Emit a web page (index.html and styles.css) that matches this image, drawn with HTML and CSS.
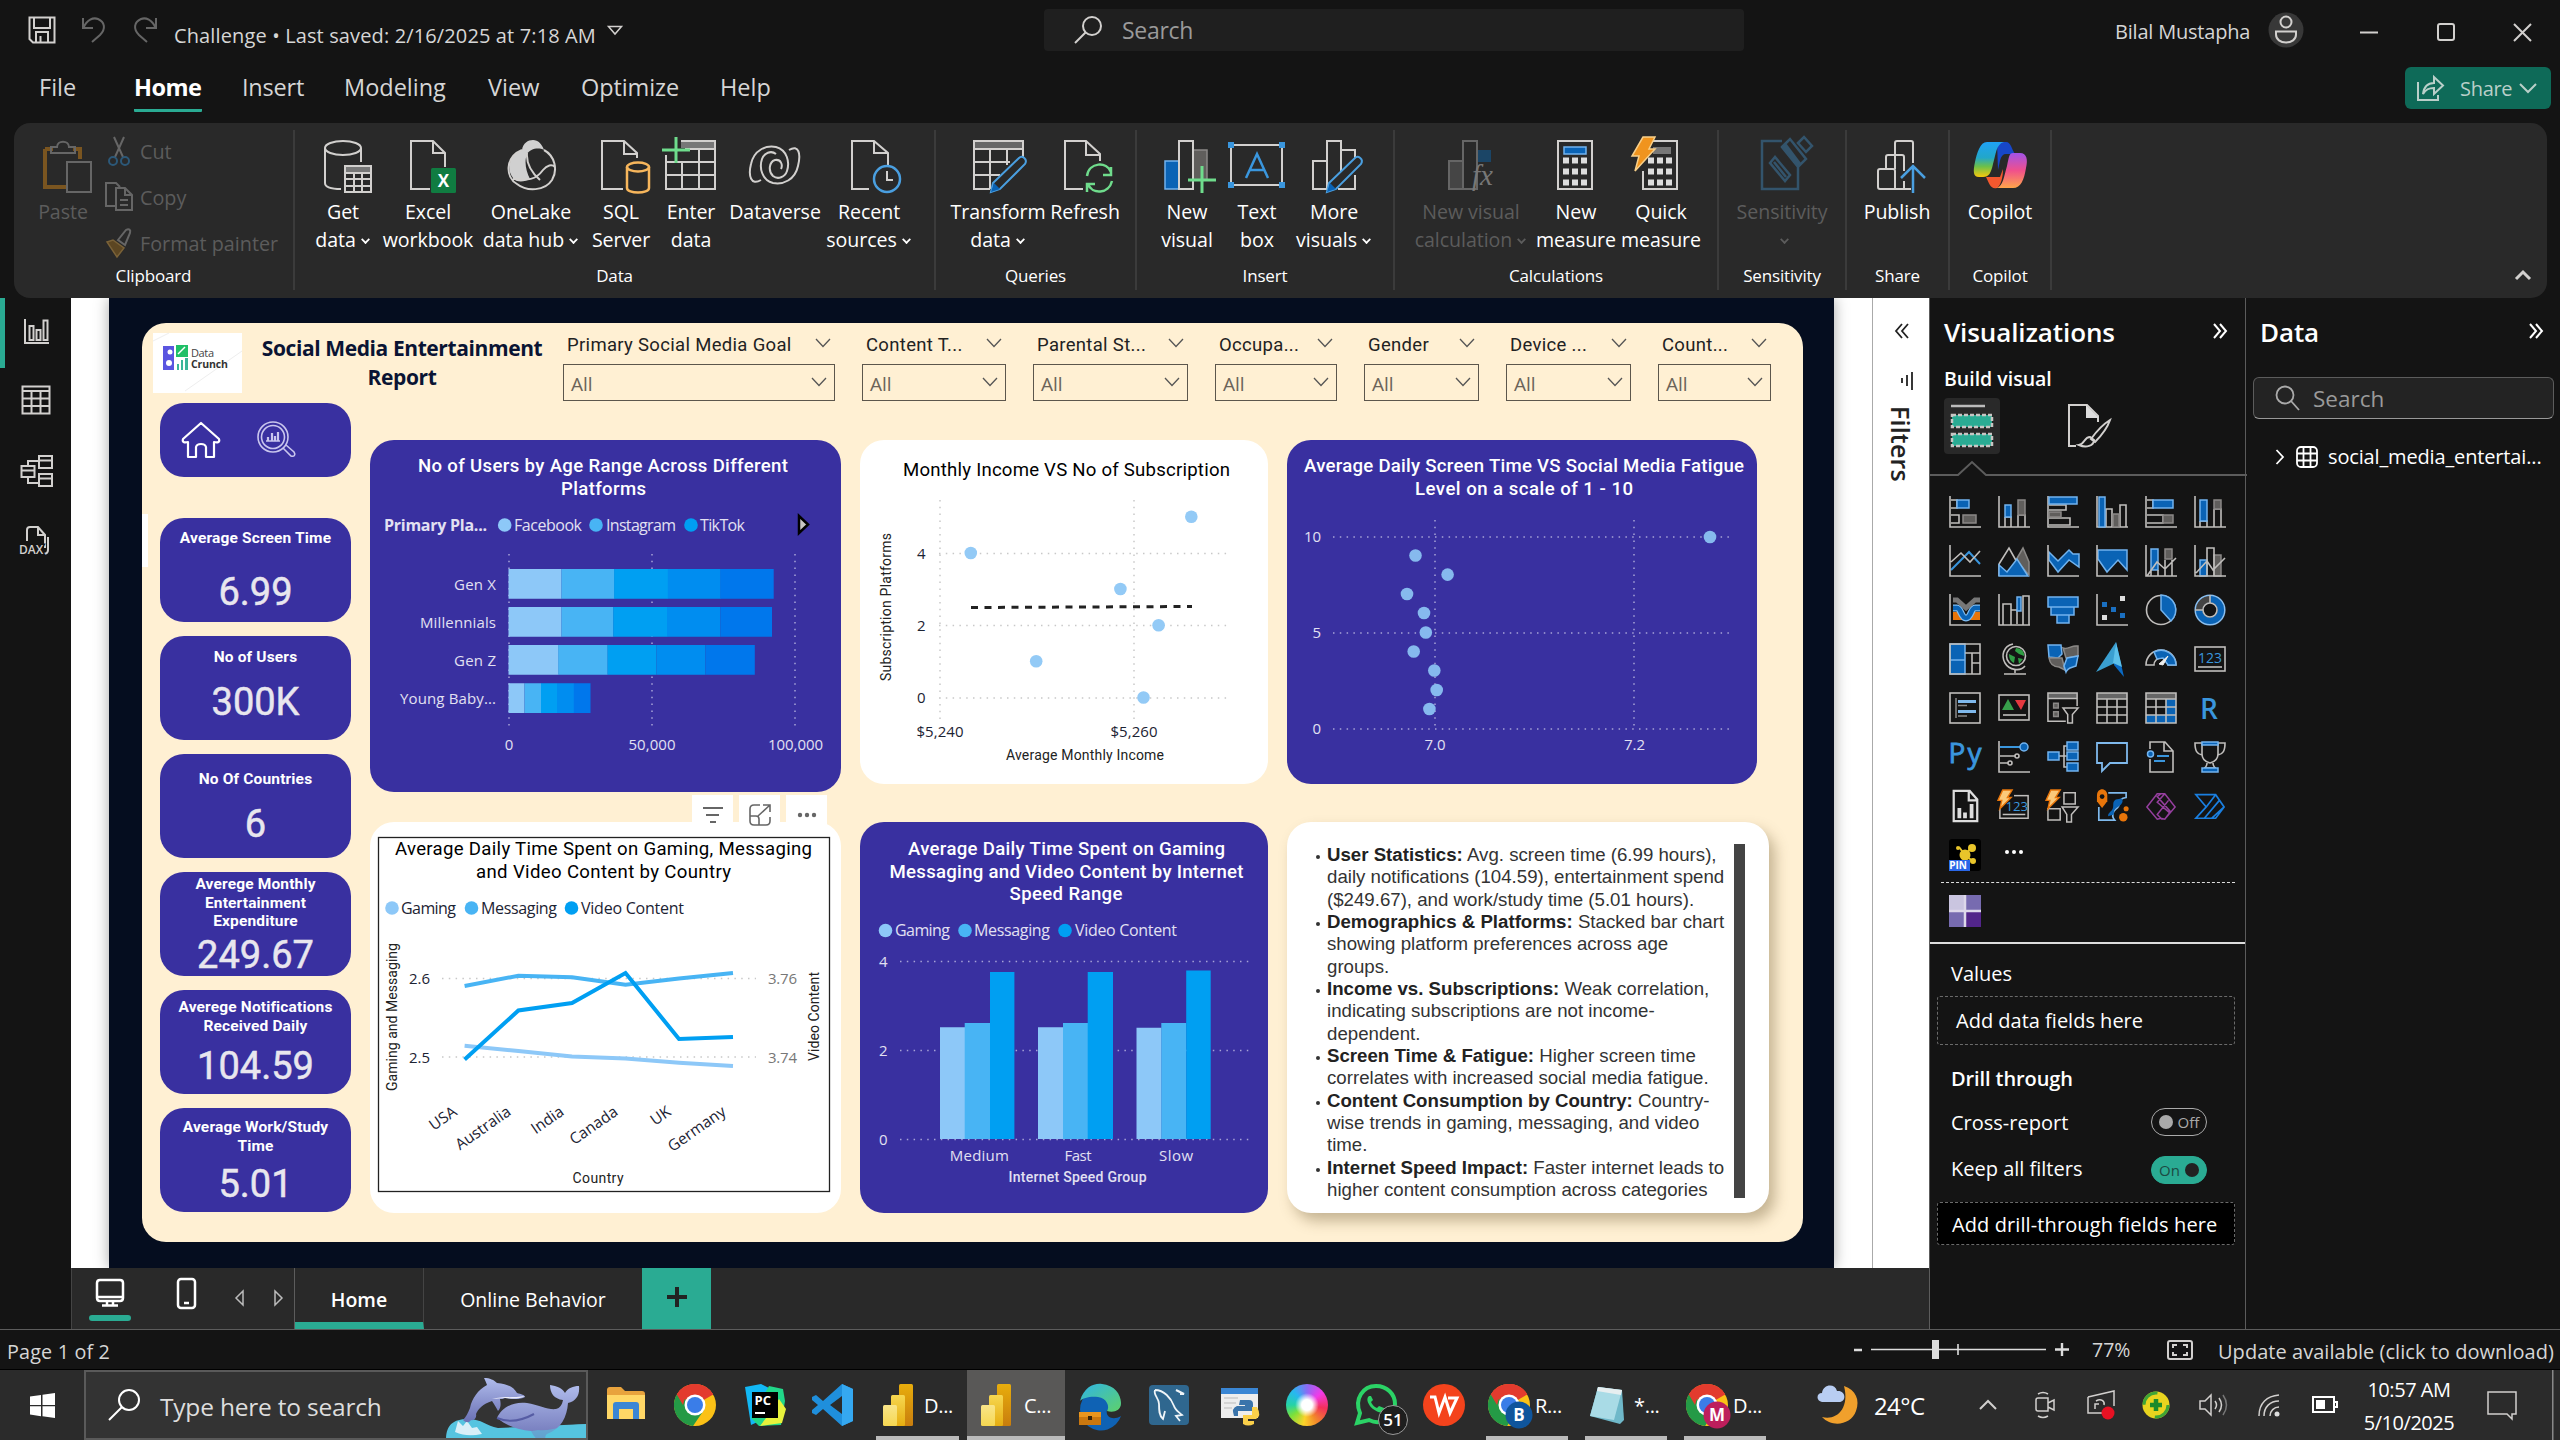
FILE: index.html
```html
<!DOCTYPE html>
<html lang="en">
<head>
<meta charset="utf-8">
<title>Challenge - Power BI Desktop</title>
<link rel="stylesheet" href="styles.css">
</head>
<body>
<svg class="defs" width="0" height="0">
  <defs>
    <linearGradient id="cpA" x1="0" y1="0" x2="0" y2="1"><stop offset="0" stop-color="#1fa2f5"/><stop offset=".45" stop-color="#22a7c9"/><stop offset=".7" stop-color="#6cc04a"/><stop offset="1" stop-color="#f8c80c"/></linearGradient>
    <linearGradient id="cpB" x1="0" y1="0" x2="0" y2="1"><stop offset="0" stop-color="#a153e8"/><stop offset=".5" stop-color="#f0508c"/><stop offset="1" stop-color="#ffa54a"/></linearGradient>
    <linearGradient id="pbi1" x1="0" y1="0" x2="0" y2="1"><stop offset="0" stop-color="#e8ad0c"/><stop offset="1" stop-color="#c87d0e"/></linearGradient>
    <linearGradient id="pbi2" x1="0" y1="0" x2="0" y2="1"><stop offset="0" stop-color="#f6d751"/><stop offset="1" stop-color="#e6ad10"/></linearGradient>
    <linearGradient id="pbi3" x1="0" y1="0" x2="0" y2="1"><stop offset="0" stop-color="#f9e589"/><stop offset="1" stop-color="#f6d751"/></linearGradient>
    <linearGradient id="edge" x1="0" y1="0" x2="1" y2="1"><stop offset="0" stop-color="#2fb4e6"/><stop offset="1" stop-color="#5ed16a"/></linearGradient>
    <linearGradient id="whale" x1="0" y1="0" x2="0" y2="1"><stop offset="0" stop-color="#b0bcec"/><stop offset="1" stop-color="#6a70b4"/></linearGradient>
    <g id="chrome">
      <circle cx="22" cy="22" r="21" fill="#fbc116"/>
      <path d="M22 22 3.8 11.5A21 21 0 0 1 40.2 11.5Z" fill="#e33b2e"/>
      <path d="M22 22 3.8 11.5A21 21 0 0 0 20 43L31 27Z" fill="#249a46"/>
      <path d="M13 11.500H40.200A21 21 0 0 0 3.800 11.500L10 22Z" fill="#e33b2e"/>
      <circle cx="22" cy="22" r="10.500" fill="#fff"/><circle cx="22" cy="22" r="8" fill="#3a7de8"/>
    </g>
    <g id="pbi"><rect x="17" y="1" width="14" height="42" rx="1.500" fill="url(#pbi1)"/><rect x="9" y="12" width="14" height="31" rx="1.500" fill="url(#pbi2)"/><rect x="1" y="22" width="14" height="21" rx="1.500" fill="url(#pbi3)"/></g>
    <g id="chev"><path d="M1 1l7 7.500 7-7.500" fill="none" stroke="#555" stroke-width="1.300"/></g>
  </defs>
</svg>

<header class="titlebar">
  <svg class="qa save" width="28" height="28" viewBox="0 0 28 28"><path class="l" d="M1.500 1.500h25v25H5l-3.500-3.500zM6 1.500v10.500h16V1.500M8 26V16h12v10M12.500 20v6"/></svg>
  <svg class="qa undo" width="26" height="28" viewBox="0 0 26 28"><path class="d" d="M2 2v10h10M2.500 11.500C6 4 12 1 17 3c7 3 8 10 2 16l-8 7"/></svg>
  <svg class="qa redo" width="26" height="28" viewBox="0 0 26 28"><path class="d" d="M24 2v10H14M23.500 11.500C20 4 14 1 9 3c-7 3-8 10-2 16l8 7"/></svg>
  <span class="doc">Challenge • Last saved: 2/16/2025 at 7:18 AM</span>
  <svg class="doc-caret" width="16" height="11" viewBox="0 0 16 11"><path class="l thin" d="M1.500 1.500h13L8 9z"/></svg>
  <div class="top-search">
    <svg width="30" height="30" viewBox="0 0 30 30"><circle class="l" cx="19" cy="11" r="9"/><path class="l" d="M12.500 17.500 2 28"/></svg>
    <span>Search</span>
  </div>
  <span class="user">Bilal Mustapha</span>
  <svg class="avatar" width="36" height="36" viewBox="0 0 36 36"><circle cx="18" cy="18" r="17.500" fill="#383838"/><circle class="l" cx="18" cy="10" r="5.500"/><path class="l" d="M8 19.500h20v3c0 5-4.500 8-10 8s-10-3-10-8z"/></svg>
  <svg class="win" width="180" height="24" viewBox="0 0 180 24"><path class="l" d="M2 12.500h18" /><rect class="l" x="80" y="4" width="16" height="16" rx="2"/><path class="l" d="M156 4l17 17M173 4l-17 17"/></svg>
</header>

<nav class="menubar">
  <a class="m-file"><span>File</span></a><a class="m-home on"><span>Home</span></a><a class="m-insert"><span>Insert</span></a><a class="m-model"><span>Modeling</span></a><a class="m-view"><span>View</span></a><a class="m-opt"><span>Optimize</span></a><a><span>Help</span></a>
  <div class="share">
    <svg width="30" height="28" viewBox="0 0 30 28"><path class="s" d="M2 8v18h20v-5M2 8v0M7 20c1-8 5-11 11-11V3l9 8.500-9 8.500v-6c-5 0-8 1-11 6z"/></svg>
    <span>Share</span>
    <svg width="18" height="12" viewBox="0 0 18 12"><path class="s" d="M1 2l8 8 8-8"/></svg>
  </div>
</nav>

<section class="ribbon">
  <div class="grp g-clip">
    <div class="btns">
      <div class="rb off"><svg width="60" height="60" viewBox="0 0 60 60"><path d="M12 14h8M40 14h7v10M12 14v38h22" fill="none" stroke="#7a5520" stroke-width="4"/><path class="d" d="M18 18v-6h6c0-7 12-7 12 0h6v6zM34 27h24v30H34z"/></svg><span>Paste</span></div>
      <div class="clip-list">
        <div><svg width="28" height="30" viewBox="0 0 28 30"><path class="d" d="M9 1l9 20M19 1l-9 20"/><circle cx="8" cy="25" r="4" fill="none" stroke="#2c5878" stroke-width="2"/><circle cx="20" cy="25" r="4" fill="none" stroke="#2c5878" stroke-width="2"/></svg>Cut</div>
        <div><svg width="28" height="30" viewBox="0 0 28 30"><path class="d" d="M10 24H1V1h10l4 4M11 6h9l7 7v15H11zM20 6v7h7M15 18h8M15 23h8"/></svg>Copy</div>
        <div><svg width="28" height="30" viewBox="0 0 28 30"><path class="d" d="M13 12l8-10c3-2 5 0 4 3l-5 12z"/><path d="M2 14l6-2 11 8-7 9z" fill="#5c4622" stroke="#7a6238" stroke-width="1.500"/></svg>Format painter</div>
      </div>
    </div>
    <div class="cap">Clipboard</div>
  </div>
  <div class="grp g-data">
    <div class="btns">
      <div class="rb"><svg width="60" height="60" viewBox="0 0 60 60"><ellipse class="l" cx="30" cy="13" rx="18" ry="7"/><path class="l" d="M12 13v35c0 4 6 6 16 6M48 13v14"/><path d="M31 31h27v26H31z" fill="#292929"/><path d="M32 32h26v5H32z" fill="#777"/><path class="l" d="M32 31h26v26H32zM32 38h26M32 44h26M32 51h26M41 38v19M49 38v19"/></svg><span>Get</span><span>data<i></i></span></div>
      <div class="rb ml35"><svg width="60" height="60" viewBox="0 0 60 60"><path class="l" d="M32 54H13V6h22l12 12v14M35 6v12h12"/><rect x="33" y="33" width="25" height="25" rx="1.500" fill="#107c41"/><text x="45.500" y="52" class="xl">X</text></svg><span>Excel</span><span>workbook</span></div>
      <div class="rb ml53"><svg width="60" height="60" viewBox="0 0 60 60"><path d="M21 15C22 8 27 5 32 5s9 4 11 10c-6-3-14-1-17 4-3 8-1 17 3 25-5 3-14 4-17-1-7-9-4-22 9-28Z" fill="#d0d0d0"/><path class="l" d="M21 15C4 22 4 42 16 49c10 8 28 7 35-4 6-10 3-24-8-30M26 18c-1 12 5 20 13 27M12 44c14 1 22 2 30-9 4-5 9-6 12-3"/></svg><span>OneLake</span><span>data hub<i></i></span></div>
      <div class="rb ml40"><svg width="60" height="60" viewBox="0 0 60 60"><path class="l" d="M32 54H11V6h22l13 12v5M33 6v13h14"/><ellipse cx="47" cy="32" rx="11" ry="4.500" class="o"/><path class="o" d="M36 32v21c0 6 22 6 22 0V32"/></svg><span>SQL</span><span>Server</span></div>
      <div class="rb ml20"><svg width="60" height="60" viewBox="0 0 60 60"><path d="M20 7h34v6H20z" fill="#777"/><path class="l" d="M20 6h34v48H5V20M24 14h30M5 27h49M5 40h49M21 27v27M38 14v40"/><path d="M15 2v26M1 15h28" stroke="#6fdc8c" stroke-width="3" fill="none"/></svg><span>Enter</span><span>data</span></div>
      <div class="rb ml34"><svg width="60" height="60" viewBox="0 0 60 60"><path class="l" d="M16 45c-10 6-13-4-10-16C9 15 21 10 31 12c11 3 14 15 11 24-2 6-9 9-14 5-5-5-4-14 2-16 6-1 8 5 6 9"/><path class="l" d="M44 15c10-6 12 4 9 16-3 14-15 19-25 17-11-3-14-15-11-24 2-6 9-9 14-5"/></svg><span>Dataverse</span></div>
      <div class="rb ml43"><svg width="60" height="60" viewBox="0 0 60 60"><path class="l" d="M30 54H13V6h22l14 12v12M35 6v12h13"/><circle cx="48" cy="44" r="13" fill="none" stroke="#4a9fe0" stroke-width="2.500"/><path class="l" d="M48 36v9h6"/></svg><span>Recent</span><span>sources<i></i></span></div>
    </div>
    <div class="cap">Data</div>
  </div>
  <div class="grp g-q">
    <div class="btns">
      <div class="rb"><svg width="60" height="60" viewBox="0 0 60 60"><path d="M7 7h48v6H7z" fill="#666"/><path class="l" d="M22 54H6V6h49v16M6 14h49M6 27h36M6 40h26M22 14v40M39 14v16"/><path class="pen" d="M51 23c3-3 9 1 6 6L32 54l-9 3 2-9z"/><path d="M23 57l3-9 6 6z" fill="#0a63b5"/></svg><span>Transform</span><span>data<i></i></span></div>
      <div class="rb ml37"><svg width="60" height="60" viewBox="0 0 60 60"><path class="l" d="M28 54H10V6h21l14 13v7M31 6v14h15"/><path class="gr" d="M32 41c2-14 20-15 24-4M56 32v8h-8M57 46c-3 13-20 14-24 3M32 57v-8h8"/></svg><span>Refresh</span></div>
    </div>
    <div class="cap">Queries</div>
  </div>
  <div class="grp g-i">
    <div class="btns">
      <div class="rb"><svg width="60" height="60" viewBox="0 0 60 60"><path class="fb" d="M8 26h14v28H8z"/><path class="fg" d="M36 15h14v30H36z"/><path class="l" d="M22 6h14v48H22z"/><path d="M45 31v27M31 45h28" stroke="#6fdc8c" stroke-width="3"/></svg><span>New</span><span>visual</span></div>
      <div class="rb ml20"><svg width="60" height="60" viewBox="0 0 60 60"><rect class="l" x="4" y="10" width="51" height="40"/><path d="M1 7h6v6H1zM52 7h6v6h-6zM1 47h6v6H1zM52 47h6v6h-6z" fill="#3a96dd"/><path d="M19 43L30 19l11 24M23 35h14" fill="none" stroke="#3a96dd" stroke-width="2.500"/></svg><span>Text</span><span>box</span></div>
      <div class="rb ml27"><svg width="60" height="60" viewBox="0 0 60 60"><path class="l" d="M24 54H9V26h14v28M23 26V6h14v34M37 15h14v8M51 40v14H34"/><path class="pen" d="M51 23c3-3 9 1 6 6L32 54l-9 3 2-9z"/><path d="M23 57l3-9 6 6z" fill="#0a63b5"/></svg><span>More</span><span>visuals<i></i></span></div>
    </div>
    <div class="cap">Insert</div>
  </div>
  <div class="grp g-c">
    <div class="btns">
      <div class="rb off"><svg width="60" height="60" viewBox="0 0 60 60"><path d="M8 26h14v28H8z" fill="#454545"/><path class="d" d="M8 26h14v28H8zM22 54V6h14v48z"/><path d="M37 15h13v12H37z" fill="#1b4566"/><text x="31" y="50" class="fx">fx</text></svg><span>New visual</span><span>calculation<i></i></span></div>
      <div class="rb ml55"><svg width="60" height="60" viewBox="0 0 60 60"><path class="l" d="M12 6h34v48H12z"/><path class="fb" d="M18 12h22v7H18z"/><path d="M17 25.500h25M17 36.500h25M17 47.500h25" stroke="#ddd" stroke-width="6" stroke-dasharray="6 3"/></svg><span>New</span><span>measure</span></div>
      <div class="rb ml35"><svg width="60" height="60" viewBox="0 0 60 60"><path class="l" d="M12 36v18h34V6H22"/><path d="M22 12h18v7H22z" fill="#777"/><path d="M17 25.500h25M17 36.500h25M17 47.500h25" stroke="#ddd" stroke-width="6" stroke-dasharray="6 3"/><path d="M12 2h12l-6 12h6L4 36l4-15H1z" fill="#f0941e" stroke="#f8d08a" stroke-width="1.500"/></svg><span>Quick</span><span>measure</span></div>
    </div>
    <div class="cap">Calculations</div>
  </div>
  <div class="grp g-s">
    <div class="btns"><div class="rb off"><svg width="60" height="60" viewBox="0 0 60 60"><path d="M30 6H10v48h36V32M30 12l8-8 16 20-8 8zM46 8l6-6 8 9-6 6zM18 28l5-6 15 18-5 6zM22 27l12 15" fill="none" stroke="#33546c" stroke-width="2.500"/><path d="M30 12l4-4 15 20-3 4z" fill="#33546c"/></svg><span>Sensitivity</span><span><i></i></span></div></div>
    <div class="cap">Sensitivity</div>
  </div>
  <div class="grp g-p">
    <div class="btns"><div class="rb"><svg width="60" height="60" viewBox="0 0 60 60"><path class="l" d="M28 34V8q0-2 2-2h14q2 0 2 2v20M19 34V22q0-2 2-2h14q2 0 2 2v14M11 36q0-2 2-2h13q2 0 2 2v18H13q-2 0-2-2zM28 54h16M37 46v8"/><path d="M46 58V32M34 43l12-12 12 12" fill="none" stroke="#4a9fe0" stroke-width="2.500"/></svg><span>Publish</span></div></div>
    <div class="cap">Share</div>
  </div>
  <div class="grp g-co">
    <div class="btns"><div class="rb"><svg width="60" height="60" viewBox="0 0 60 60"><path d="M27 7h9c5 0 6 8 9 12h-9c-6 0-6 8-8 16z" fill="#1747c9"/><path d="M17 7h17c-8 2-8 12-11 22-2 9-4 13-10 13H9c-6 0-6-6-4-15S10 7 17 7Z" fill="url(#cpA)"/><path d="M16 42h14l3-8c0 8-2 16-6 19-6 2-8-5-11-11Z" fill="#f4582e"/><path d="M43 18h7c7 0 8 7 6 15-2 12-5 20-13 20H26c7-1 8-12 11-22 2-9 2-13 6-13Z" fill="url(#cpB)"/></svg><span>Copilot</span></div></div>
    <div class="cap">Copilot</div>
  </div>
  <svg class="collapse" width="18" height="12" viewBox="0 0 18 12"><path class="l thick" d="M2 10l7-7 7 7"/></svg>
</section>

<main class="main">
  <aside class="rail">
    <svg width="30" height="30" viewBox="0 0 30 30"><path class="l" d="M4 2v24h24M8.500 9h4v14h-4zM15.500 13h4v10h-4zM22.500 3.500h4v19.500h-4z"/></svg>
    <svg width="30" height="30" viewBox="0 0 30 30"><path class="l" d="M1.500 1.500h27v27h-27zM1.500 6h27M1.500 13.500h27M1.500 21h27M10.500 6v22M19.500 6v22"/></svg>
    <svg width="34" height="34" viewBox="0 0 34 34"><path class="l" d="M1.500 12h13v11h-13zM1.500 16.500h13M19 2h13v12H19zM19 6.500h13M19 20h13v12H19zM19 24.500h13M8 12V7h11M8 23v6h11"/></svg>
    <svg width="32" height="32" viewBox="0 0 32 32"><path class="l" d="M8 16V5q0-3 3-3h8l7 8v13M19 2v8h7M29 12v13q0 4-5 4"/><text x="0" y="29" class="dax">DAX</text></svg>
  </aside>

  <div class="center">
    <div class="stage">
      <div class="page">
        <div class="report">
          <div class="rhead">
            <svg class="logo" width="89" height="60" viewBox="0 0 89 60"><path fill="#fff" d="M0 0h89v60H0z"/><path d="M32 58L89 18M0 8l16-8" stroke="#eee"/><path d="M10 13h11v24H10z" fill="#5a55e0"/><circle cx="17" cy="19" r="2.500" fill="#fff"/><circle cx="16" cy="30" r="3" fill="#fff"/><path d="M23 12h12v12H23z" fill="#1fc067"/><path d="M25 21l7-7" stroke="#fff" stroke-width="1.500"/><path d="M24 37v-6h2v6zM28 37V27h2v10zM32 37V25h3v12z" fill="#3bb59a"/><text x="38" y="24" class="lg1" textLength="23">Data</text><text x="38" y="34.500" class="lg2" textLength="37">Crunch</text></svg>
            <h1>Social Media Entertainment<br>Report</h1>
            <div class="slicers">
              <div class="sl s1"><label>Primary Social Media Goal<svg width="16" height="10"><use href="#chev"/></svg></label><div>All<svg width="16" height="10"><use href="#chev"/></svg></div></div>
              <div class="sl s2"><label>Content T...<svg width="16" height="10"><use href="#chev"/></svg></label><div>All<svg width="16" height="10"><use href="#chev"/></svg></div></div>
              <div class="sl s3"><label>Parental St...<svg width="16" height="10"><use href="#chev"/></svg></label><div>All<svg width="16" height="10"><use href="#chev"/></svg></div></div>
              <div class="sl s4"><label>Occupa...<svg width="16" height="10"><use href="#chev"/></svg></label><div>All<svg width="16" height="10"><use href="#chev"/></svg></div></div>
              <div class="sl s5"><label>Gender<svg width="16" height="10"><use href="#chev"/></svg></label><div>All<svg width="16" height="10"><use href="#chev"/></svg></div></div>
              <div class="sl s6"><label>Device ...<svg width="16" height="10"><use href="#chev"/></svg></label><div>All<svg width="16" height="10"><use href="#chev"/></svg></div></div>
              <div class="sl s7"><label>Count...<svg width="16" height="10"><use href="#chev"/></svg></label><div>All<svg width="16" height="10"><use href="#chev"/></svg></div></div>
            </div>
          </div>
          <div class="rbody">
            <div class="kpis">
              <div class="navcard">
                <svg width="42" height="38" viewBox="0 0 42 38"><path d="M3 18L21 2l18 16c1 3-1 4-5 3v15h-8V26c-1-4-9-4-10 0v10H8V21c-4 1-6 0-5-3Z" fill="none" stroke="#fff" stroke-width="2.200" stroke-linejoin="round"/></svg>
                <svg width="42" height="38" viewBox="0 0 42 38"><g fill="none" stroke="#c9c6ee" stroke-width="1.600"><circle cx="18" cy="16" r="15"/><circle cx="18" cy="16" r="11.500"/><path d="M28 27l8 8c3 1 5-1 3-4l-8-7M11 20h14"/><path d="M13 20v-4M17 20v-8M20 20v-5M23 20v-9" stroke-width="2.200"/></g></svg>
              </div>
              <div class="kpi k1"><h3>Average Screen Time</h3><b>6.99</b></div>
              <div class="kpi k2"><h3>No of Users</h3><b>300K</b></div>
              <div class="kpi k3"><h3>No Of Countries</h3><b>6</b></div>
              <div class="kpi k4"><h3>Averege Monthly<br>Entertainment<br>Expenditure</h3><b>249.67</b></div>
              <div class="kpi k5"><h3>Averege Notifications<br>Received Daily</h3><b>104.59</b></div>
              <div class="kpi k6"><h3>Average Work/Study<br>Time</h3><b>5.01</b></div>
            </div>

            <div class="col c2">
              <svg class="card purple" width="471" height="352" viewBox="371 440 471 352">
                <g class="ttl"><text x="604" y="472" textLength="370">No of Users by Age Range Across Different</text><text x="604.500" y="495" textLength="85">Platforms</text></g>
                <g class="lgd"><text x="385" y="531" textLength="103" font-weight="700">Primary Pla...</text><text x="515" y="531" textLength="68">Facebook</text><text x="607" y="531" textLength="70">Instagram</text><text x="701" y="531" textLength="45">TikTok</text></g>
                <circle cx="505.700" cy="525" r="6.800" fill="#8dc8f8"/><circle cx="597" cy="525" r="6.800" fill="#48b4f4"/><circle cx="692" cy="525" r="6.800" fill="#009ff2"/>
                <path d="M800 516l9 8.500-9 8.500z" fill="#c8c6c4" stroke="#000" stroke-width="2.500"/>
                <path class="grid" d="M510 554v176M653 554v176M796 554v176"/>
                <g fill="#8dc8f8"><path d="M509.500 569h53v29.700h-53zM509.500 607h53v29.700h-53zM509.500 645h50v29.700h-50zM509.500 683.300h16v29.700h-16z"/></g>
                <g fill="#48b4f4"><path d="M562.400 569h53v29.700h-53zM562.400 607h52v29.700h-52zM559.200 645h49.500v29.700h-49.500zM525.500 683.300h16.500v29.700h-16.500z"/></g>
                <g fill="#009ff2"><path d="M615.100 569h54v29.700h-54zM614.200 607h54v29.700h-54zM608.500 645h49v29.700h-49zM542 683.300h16v29.700h-16z"/></g>
                <g fill="#008df0"><path d="M668.800 569h53v29.700h-53zM668 607h53.500v29.700h-53.500zM657.500 645h49v29.700h-49zM558 683.300h17v29.700h-17z"/></g>
                <g fill="#0077ec"><path d="M721.500 569h53.200v29.700h-53.200zM721.500 607h51.500v29.700h-51.500zM706.500 645h49.300v29.700h-49.300zM574.800 683.300h16.700v29.700h-16.700z"/></g>
                <g class="ax end"><text x="497" y="590" textLength="42">Gen X</text><text x="497" y="628" textLength="76">Millennials</text><text x="497" y="666" textLength="42">Gen Z</text><text x="497" y="704" textLength="96">Young Baby...</text></g>
                <g class="ax mid"><text x="510" y="750">0</text><text x="653" y="750" textLength="47">50,000</text><text x="796.500" y="750" textLength="55">100,000</text></g>
              </svg>
              <div class="visual">
                <div class="vtools"><span><svg width="22" height="18" viewBox="0 0 22 18"><path d="M1 2h20M4 9h13M8 16h6" stroke="#666" stroke-width="2"/></svg></span><span><svg width="24" height="24" viewBox="0 0 24 24"><path d="M12 2H6Q2 2 2 6v12q0 4 4 4h12q4 0 4-4v-4M2 13h6q3 0 3 3v6M10 13L22 2M15 2h7v7" fill="none" stroke="#666" stroke-width="1.600"/></svg></span><span><svg width="20" height="6" viewBox="0 0 20 6"><g fill="#666"><circle cx="3" cy="3" r="2.200"/><circle cx="10" cy="3" r="2.200"/><circle cx="17" cy="3" r="2.200"/></g></svg></span></div>
                <svg class="card white" width="471" height="391" viewBox="371 822 471 391">
                  <rect x="379.500" y="837.500" width="451" height="354" fill="none" stroke="#222" stroke-width="1.300"/>
                  <g class="ttl dk"><text x="604.500" y="855" textLength="417">Average Daily Time Spent on Gaming, Messaging</text><text x="604.500" y="878" textLength="255">and Video Content by Country</text></g>
                  <g class="lgd dk"><text x="402" y="914" textLength="55">Gaming</text><text x="482" y="914" textLength="76">Messaging</text><text x="582" y="914" textLength="103">Video Content</text></g>
                  <circle cx="393" cy="908" r="6.800" fill="#8dc8f8"/><circle cx="472.500" cy="908" r="6.800" fill="#48b4f4"/><circle cx="572.500" cy="908" r="6.800" fill="#009ff2"/>
                  <path class="grid lt" d="M443 978.500h314M443 1057h314"/>
                  <g class="ax dk"><text x="410" y="984" textLength="21">2.6</text><text x="410" y="1062.500" textLength="21">2.5</text></g>
                  <g class="ax gy"><text x="769" y="984" textLength="29">3.76</text><text x="769" y="1062.500" textLength="29">3.74</text></g>
                  <g fill="none" stroke-width="4"><path stroke="#8dc8f8" d="M465.600 1045.700l53.800 5.300 53.600 5.500 53.500 2 53.500 4.200 54 3.300"/><path stroke="#48b4f4" d="M465.600 986l53.800-10.300 53.600 1.600 53.500 7.400 53.500-6.200 54-5.500"/><path stroke="#009ff2" d="M465.600 1059.500l53.800-49 53.600-7.500 53.500-30 53.500 66 54-2"/></g>
                  <g class="vt"><text transform="translate(398 1017) rotate(-90)" textLength="148">Gaming and Messaging</text><text transform="translate(820 1016.500) rotate(-90)" textLength="89">Video Content</text></g>
                  <g class="ax dk end it"><text transform="translate(459 1114) rotate(-35)">USA</text><text transform="translate(513 1114) rotate(-35)">Australia</text><text transform="translate(566 1114) rotate(-35)">India</text><text transform="translate(620 1114) rotate(-35)">Canada</text><text transform="translate(673 1114) rotate(-35)">UK</text><text transform="translate(728 1114) rotate(-35)">Germany</text></g>
                  <text class="at" x="599" y="1183" textLength="51">Country</text>
                </svg>
              </div>
            </div>

            <div class="col c3">
              <svg class="card white" width="408" height="344" viewBox="861 440 408 344">
                <g class="ttl dk"><text x="1067.500" y="476" textLength="327">Monthly Income VS No of Subscription</text></g>
                <path class="grid lt" d="M941 500v220M1135 500v220M940 553.500h292M940 625.500h292M940 698h292"/>
                <path d="M972 607.500L1193 606.500" stroke="#222" stroke-width="3" stroke-dasharray="7 6.500"/>
                <g fill="#93caf6"><circle cx="971.800" cy="553" r="6.300"/><circle cx="1192.300" cy="516.700" r="6.300"/><circle cx="1121.400" cy="589" r="6.300"/><circle cx="1159.600" cy="625.300" r="6.300"/><circle cx="1037.200" cy="661.300" r="6.300"/><circle cx="1144.500" cy="697.500" r="6.300"/></g>
                <g class="ax dk"><text x="918" y="559">4</text><text x="918" y="631">2</text><text x="918" y="703">0</text><text x="917.500" y="737" textLength="47">$5,240</text><text x="1111.500" y="737" textLength="47">$5,260</text></g>
                <text class="at" x="1086" y="760" textLength="158">Average Monthly Income</text>
                <g class="vt"><text transform="translate(892 607) rotate(-90)" textLength="148">Subscription Platforms</text></g>
              </svg>
              <svg class="card purple" width="408" height="391" viewBox="861 822 408 391">
                <g class="ttl"><text x="1067.500" y="855" textLength="317">Average Daily Time Spent on Gaming</text><text x="1067.500" y="878" textLength="354">Messaging and Video Content by Internet</text><text x="1067" y="900" textLength="113">Speed Range</text></g>
                <g class="lgd"><text x="896" y="936" textLength="55">Gaming</text><text x="975" y="936" textLength="76">Messaging</text><text x="1076" y="936" textLength="102">Video Content</text></g>
                <circle cx="886.500" cy="930.500" r="6.800" fill="#8dc8f8"/><circle cx="966" cy="930.500" r="6.800" fill="#48b4f4"/><circle cx="1066" cy="930.500" r="6.800" fill="#009ff2"/>
                <path class="grid" d="M901 961.500h353M901 1050.500h353M901 1139.500h353"/>
                <path fill="#8dc8f8" d="M941 1027.300h25V1139h-25zM1039 1027.300h25V1139h-25zM1137.500 1027.700h25V1139h-25z"/>
                <path fill="#48b4f4" d="M965.700 1023h25.300V1139h-25.300zM1064 1023h25V1139h-25zM1162.300 1023h25V1139h-25z"/>
                <path fill="#009ff2" d="M991 972h24.400V1139H991zM1088.700 972h25.300V1139h-25.300zM1187.200 970.500h24.500V1139h-24.500z"/>
                <g class="ax"><text x="880" y="967">4</text><text x="880" y="1056">2</text><text x="880" y="1145">0</text></g>
                <g class="ax mid"><text x="980.300" y="1161" textLength="59">Medium</text><text x="1079" y="1161" textLength="27">Fast</text><text x="1177" y="1161" textLength="34">Slow</text></g>
                <text class="at wt" x="1078.500" y="1182" textLength="138">Internet Speed Group</text>
              </svg>
            </div>

            <div class="col c4">
              <svg class="card purple" width="470" height="344" viewBox="1288 440 470 344">
                <g class="ttl"><text x="1525" y="472" textLength="440">Average Daily Screen Time VS Social Media Fatigue</text><text x="1525" y="495" textLength="218">Level on a scale of 1 - 10</text></g>
                <path class="grid" d="M1436 520v210M1635 520v210M1334 537h401M1334 633h401M1334 729h401"/>
                <g fill="#86b9ee"><circle cx="1711" cy="537" r="6.300"/><circle cx="1416.500" cy="555.500" r="6.300"/><circle cx="1448.600" cy="574.600" r="6.300"/><circle cx="1408" cy="594" r="6.300"/><circle cx="1425" cy="613" r="6.300"/><circle cx="1426.800" cy="632.500" r="6.300"/><circle cx="1414.700" cy="651.500" r="6.300"/><circle cx="1435.300" cy="670.500" r="6.300"/><circle cx="1437.700" cy="690" r="6.300"/><circle cx="1430.400" cy="709" r="6.300"/></g>
                <g class="ax end"><text x="1322" y="542" textLength="17">10</text><text x="1322" y="638">5</text><text x="1322" y="734">0</text></g>
                <g class="ax mid"><text x="1436" y="750" textLength="21">7.0</text><text x="1635.500" y="750" textLength="21">7.2</text></g>
              </svg>
              <div class="notes">
                <ul>
                  <li><b>User Statistics:</b> Avg. screen time (6.99 hours),<br>daily notifications (104.59), entertainment spend<br>($249.67), and work/study time (5.01 hours).</li>
                  <li><b>Demographics &amp; Platforms:</b> Stacked bar chart<br>showing platform preferences across age<br>groups.</li>
                  <li><b>Income vs. Subscriptions:</b> Weak correlation,<br>indicating subscriptions are not income-<br>dependent.</li>
                  <li><b>Screen Time &amp; Fatigue:</b> Higher screen time<br>correlates with increased social media fatigue.</li>
                  <li><b>Content Consumption by Country:</b> Country-<br>wise trends in gaming, messaging, and video<br>time.</li>
                  <li><b>Internet Speed Impact:</b> Faster internet leads to<br>higher content consumption across categories</li>
                </ul>
                <div class="sbar"></div>
              </div>
            </div>
          </div>
        </div>
      </div>
      <div class="filters">
        <svg width="16" height="16" viewBox="0 0 16 16"><path d="M8 1L2 8l6 7M14 1L8 8l6 7" fill="none" stroke="#222" stroke-width="1.800"/></svg>
        <svg class="fi" width="16" height="18" viewBox="0 0 16 18"><path d="M14 0v18M9 3v11M4 6v5" stroke="#222" stroke-width="1.800"/></svg>
        <span>Filters</span>
      </div>
    </div>
    <div class="tabs">
      <div class="views">
        <svg class="desk" width="42" height="46" viewBox="0 0 42 46"><path class="w" d="M11 3h20q3 0 3 3v15q0 3-3 3H11q-3 0-3-3V6q0-3 3-3zM8 20h26M18 24v4M24 24v4M13 28.500h16"/><rect x="0" y="38" width="42" height="6" rx="3" fill="#2aab93"/></svg>
        <svg class="phone" width="22" height="34" viewBox="0 0 22 34"><rect class="w" x="2" y="2" width="17" height="29" rx="3"/><path class="w" d="M8 26h5"/></svg>
        <svg class="arr" width="50" height="18" viewBox="0 0 50 18"><path d="M8 2v14L1 9zM40 2v14l7-7z" fill="none" stroke="#bbb" stroke-width="1.500"/></svg>
      </div>
      <div class="tab on">Home</div>
      <div class="tab t2">Online Behavior</div>
      <div class="plus"><svg width="20" height="20" viewBox="0 0 20 20"><path d="M10 0v20M0 10h20" stroke="#222" stroke-width="4"/></svg></div>
    </div>
  </div>

  <section class="vis">
    <div class="ph"><h2>Visualizations</h2><svg width="16" height="16" viewBox="0 0 16 16"><path d="M2 1l6 7-6 7M8 1l6 7-6 7" fill="none" stroke="#fff" stroke-width="2"/></svg></div>
    <h4>Build visual</h4>
    <div class="modes">
      <div class="mode on"><svg width="44" height="46" viewBox="0 0 44 46"><path d="M1 3h34" stroke="#bbb" stroke-width="2.500"/><path d="M2 12h40v12H2zM2 31h40v12H2z" fill="#2aab93" stroke="#c8c6c4" stroke-width="2.500" stroke-dasharray="4 2"/></svg></div>
      <div class="mode"><svg width="46" height="46" viewBox="0 0 46 46"><path class="l" d="M10 43H3V2h18l11 11v6"/><path d="M20 2v13h13z" fill="#ddd"/><path class="l" d="M44 17c-8 5-14 12-19 19l4 3c6-6 12-13 15-22zM24 34c-6 0-5 7-11 8 7 3 15 1 15-5z"/></svg></div>
    </div>
    <svg class="caret" width="317" height="26" viewBox="0 0 317 26"><path d="M0 21h28l14-13 14 13h261" fill="none" stroke="#5c5c5c" stroke-width="2"/></svg>
    <div class="gallery">
      <svg viewBox="0 0 32 32"><path class="a" d="M1 0v31h31M2 4h6v8H2M2 19h8v8H2"/><path class="fb" d="M8 4h12v8H8z"/><path class="fg" d="M14 19h13v8H14z"/></svg>
      <svg viewBox="0 0 32 32"><path class="a" d="M1 0v31h31M7 21h6v10M7 21v10M20 19h7v12M20 19v12"/><path class="fb" d="M7 9h6v12H7z"/><path class="fg" d="M20 4h7v15h-7z"/></svg>
      <svg viewBox="0 0 32 32"><path class="a" d="M1 0v31h31M2 9h17v5H2M2 22h21v7H2"/><path class="fb" d="M2 1h28v7H2z"/><path class="fg" d="M2 16h12v5H2z"/></svg>
      <svg viewBox="0 0 32 32"><path class="a" d="M1 0v31h31M10 31V13h6v18M24 31V9h6v22"/><path class="fb" d="M3 1h6v30H3z"/><path class="fg" d="M17 18h6v13h-6z"/></svg>
      <svg viewBox="0 0 32 32"><path class="a" d="M1 0v31h31M2 4h6v8H2M2 19h16v8H2"/><path class="fb" d="M8 4h20v8H8z"/><path class="fg" d="M18 19h10v8H18z"/></svg>
      <svg viewBox="0 0 32 32"><path class="a" d="M1 0v31h31M6 25h7v6M6 25v6M20 13h7v18M20 13v18"/><path class="fb" d="M6 4h7v21H6z"/><path class="fg" d="M20 4h7v9h-7z"/></svg>

      <svg viewBox="0 0 32 32"><path d="M2 25L20 7l11 12" fill="none" stroke="#3a96dd" stroke-width="2"/><path class="a" d="M1 0v31h31M2 17l10-9 9 9L31 6"/></svg>
      <svg viewBox="0 0 32 32"><path class="fg" d="M18 15l7-12 6 14v13z"/><path class="a" d="M1 19L11 3l9 16M1 19v12"/><path class="fb" d="M1 20l8 7 10-13 11 17H1z"/></svg>
      <svg viewBox="0 0 32 32"><path class="fb" d="M2 7l9 9L22 5l4 4h6v13l-10-7-11 12-9-12z"/><path class="a" d="M1 0v31h31"/></svg>
      <svg viewBox="0 0 32 32"><path class="fb" d="M2 5h29v20l-9-10-11 12-9-13z"/><path class="a" d="M1 0v31h31"/></svg>
      <svg viewBox="0 0 32 32"><path class="fb" d="M6 4h7v21H6z"/><path class="fg" d="M20 4h7v10h-7z"/><path class="a" d="M1 0v31h31M6 25v6M13 25v6M20 15v16M27 15v16M2 31l10-14 8 7L31 13"/></svg>
      <svg viewBox="0 0 32 32"><path class="fb" d="M6 15h7v16H6z"/><path class="fg" d="M20 10h7v21h-7z"/><path class="a" d="M1 0v31h31M13 31V3h7v28M2 28l11-12 6 9L31 13"/></svg>

      <svg viewBox="0 0 32 32"><path d="M4 18h10l3 3 4-3h10v8H4z" fill="#e8750a"/><path d="M4 14h4c4 0 4 10 9 10s5-10 9-10h5" fill="none" stroke="#7fbdf2" stroke-width="7"/><path d="M4 14h4c4 0 4 10 9 10s5-10 9-10h5" fill="none" stroke="#0a63b5" stroke-width="4.500"/><path d="M4 6h4l9 8 9-8h5" fill="none" stroke="#777" stroke-width="5"/><path class="a" d="M1 0v31h31"/></svg>
      <svg viewBox="0 0 32 32"><path class="a" d="M1 0v31h31M5 31V10h8v21M13 16h6v14M25 31V2h6v29"/><path class="fb" d="M19 3h4v14h-4z"/></svg>
      <svg viewBox="0 0 32 32"><path class="fb" d="M1 3h30v10H1zM4 13h23v8H4zM10 21h12v8H10z"/></svg>
      <svg viewBox="0 0 32 32"><path class="a" d="M1 0v31h31"/><path d="M24 2h5v5h-5zM6 21h5v5H6z" fill="#ddd"/><path d="M6 8h5v5H6zM15 13h5v5h-5zM24 19h5v5h-5z" fill="#1a6fc0"/></svg>
      <svg viewBox="0 0 32 32"><circle class="a" cx="16" cy="16" r="14.500"/><path class="fb" d="M16 1a15 15 0 0 1 10 26L16 16z"/></svg>
      <svg viewBox="0 0 32 32"><circle cx="16" cy="16" r="11" fill="none" stroke="#0a63b5" stroke-width="7"/><path d="M5 16A11 11 0 0 1 16 5" fill="none" stroke="#444" stroke-width="7"/><circle cx="16" cy="16" r="14.800" fill="none" stroke="#8abff0" stroke-width="1.500"/><circle class="a" cx="16" cy="16" r="7"/><path class="a" d="M1 16h8M16 1v8"/></svg>

      <svg viewBox="0 0 32 32"><path class="fb" d="M1 1h15v16H1zM1 17h15v14H1z"/><path class="a" d="M1 1h30v30H1zM16 10h15M23 10v21M23 20h8"/></svg>
      <svg viewBox="0 0 32 32"><circle class="a" cx="18" cy="13" r="9.500"/><path d="M18 5c4 0 9 3 8 8l-5-2-4-3zM11 11l6 3-1 6c-4-2-5-5-5-9zM20 15l5 1-4 5z" fill="#2f9e44"/><path class="a" d="M15 1C5 3 3 13 7 20s15 9 20 3M17 26v4M6 31h22"/></svg>
      <svg viewBox="0 0 32 32"><path class="fb" d="M1 2h13l1 9-4 4-9-1z"/><path class="fg" d="M16 5c5 2 8-3 15-2v10l-12 2zM2 15h13l3 12-6-3C6 24 3 21 2 15z"/><path class="fb" d="M20 15l11-2-2 10c-5 2-8 1-10 6l-2-6z"/></svg>
      <svg viewBox="0 0 32 32"><path d="M20-1L0 29l19-9z" fill="#3a9fd0"/><path d="M20-1l8 35-10-12z" fill="#0a6ac4"/><path d="M20-1l6 25-9-4z" fill="#5cc0ea"/></svg>
      <svg viewBox="0 0 32 32"><path class="a" d="M1 22A15 15 0 0 1 31 22H23A7 7 0 0 0 9 22z"/><path class="fb" d="M9 9A15 15 0 0 1 31 22h-8l-5-7-6 1z"/><path d="M14 21l9-8-5 9z" fill="#eee" stroke="#eee"/></svg>
      <svg viewBox="0 0 32 32"><rect class="a" x="1" y="4" width="30" height="24"/><path class="a" d="M4 24h24" /><text x="16" y="20" class="n123">123</text></svg>

      <svg viewBox="0 0 32 32"><rect class="a" x="1" y="1" width="30" height="30"/><path d="M9 9.500h18M9 19.500h18" stroke="#7fb9ec" stroke-width="3"/><path d="M7 6v20M9 13.500h9M9 24h9" stroke="#888" stroke-width="1.500"/></svg>
      <svg viewBox="0 0 32 32"><rect class="a" x="1" y="3" width="30" height="25"/><path class="a" d="M5 23h23"/><path d="M10 7l6 11H4z" fill="#37a04b"/><path d="M17 8h11l-5 10z" fill="#e5383f"/></svg>
      <svg viewBox="0 0 34 34"><path d="M1 1h31v6H1z" fill="#666"/><path class="a" d="M20 31H1V1h31v14M1 7h31M17 17h16l-6 7v9h-5v-9z"/><path class="fg" d="M7 12h5v5H7zM7 21h5v5H7z"/></svg>
      <svg viewBox="0 0 32 32"><path d="M1 1h30v6H1z" fill="#666"/><path class="a" d="M1 1h30v30H1zM1 7h30M1 15h30M1 23h30M11 7v24M21 7v24"/></svg>
      <svg viewBox="0 0 32 32"><path d="M1 1h30v6H1z" fill="#666"/><path d="M21 7h10v24H1v-8h20z" fill="#0a63b5"/><path class="a" d="M1 1h30v30H1zM1 7h30M1 15h30M1 23h30M11 7v24M21 7v24"/></svg>
      <svg viewBox="0 0 32 32"><text x="15" y="27" class="rr">R</text></svg>

      <svg viewBox="0 0 32 32"><text x="16" y="22" class="rr py" textLength="33">Py</text></svg>
      <svg viewBox="0 0 32 32"><path class="a" d="M1 0v31h31M2 15h15M2 22h8"/><path d="M2 6h23" stroke="#3a96dd" stroke-width="2"/><circle class="fb" cx="26" cy="6" r="4"/><circle class="a" cx="19" cy="15" r="2"/><circle class="a" cx="12" cy="22" r="2"/></svg>
      <svg viewBox="0 0 32 32"><path class="a" d="M11 15h7M20 5h-3v21h3M17 15h3"/><path class="fb" d="M1 11h11v8H1zM20 1h11v8H20zM20 11h11v8H20zM20 22h11v8H20z"/></svg>
      <svg viewBox="0 0 32 32"><path d="M1 2h30v20H14l-8 8v-8H1z" fill="none" stroke="#7fb9ec" stroke-width="1.800"/></svg>
      <svg viewBox="0 0 32 32"><path class="a" d="M5 8V1h15l8 9v21H5V18M19 1v9h9"/><circle class="fb" cx="5.500" cy="13" r="3"/><path d="M12 15h12M9 20h11" stroke="#3a96dd" stroke-width="1.800"/></svg>
      <svg viewBox="0 0 32 32"><path class="a" d="M8 2h16v11c0 5-4 8-8 9-4-1-8-4-8-9zM8 2H1c0 8 2 11 7 12M24 2h7c0 8-2 11-7 12M13 22c0 3-2 5-3 5h12c-1 0-3-2-3-5"/><path class="fb" d="M8 1h16v3H8zM8 27h16v4H8z"/></svg>

      <svg viewBox="0 0 32 34"><path class="a bold" d="M4 1h17l8 9v23H4zM20 1v10h9"/><path d="M8 30V19h4v11zM14 30v-6h4v6zM21 30V15h4v15z" fill="#ddd"/></svg>
      <svg viewBox="0 0 32 34"><rect class="a" x="1" y="6" width="30" height="24"/><path class="a" d="M4 26h24"/><path d="M-1 0h17v20H-1z" fill="#141414"/><text x="19" y="22" class="n123">123</text><path d="M4 0h10L9 8h4L1 20l2-9h-4z" fill="#fbc97a" stroke="#e8750a" stroke-width="1.500"/></svg>
      <svg viewBox="0 0 34 34"><path class="a" d="M18 3h12v12H18zM1 20v12h13V20zM16 18h17l-7 8v8h-5v-8z"/><path d="M4 0h10L9 8h4L1 20l2-9h-4z" fill="#fbc97a" stroke="#e8750a" stroke-width="1.500"/></svg>
      <svg viewBox="0 0 32 34"><path d="M12 3h19v5c-8 1-6 5-8 9s-5 3-6 8 0 4 2 7H2V18" fill="none" stroke="#7fb9ec" stroke-width="1.800"/><path d="M20 10l6-1c3 3 0 7-4 9s-4 4-4 8l-6 2c-1-4 4-5 5-9s-1-6 3-9z" fill="#0a63b5"/><path d="M0 6c0-9 11-9 11 0v6l-5.500 7L0 12z" fill="#e8750a"/><circle cx="5.500" cy="7" r="2.500" fill="#141414"/><circle cx="28" cy="29" r="4.500" fill="#e8750a"/><circle cx="31" cy="20" r="2.700" fill="#e8750a"/></svg>
      <svg viewBox="0 0 32 34"><path d="M12 4L1 18l11 13 4-1 4 1 11-13L20 4h-4zM16 4l-4 3 14 16-6 8M20 4L12 13l13 11M24 11L12 26l5 5" fill="none" stroke="#953f9e" stroke-width="1.600"/></svg>
      <svg viewBox="0 0 32 34"><path d="M1 5h21l9 13-9 12H1l11-12zM12 18L22 5M10 30L26 11M18 30L31 18" fill="none" stroke="#1a7fe0" stroke-width="1.800"/></svg>

      <svg viewBox="0 0 32 32"><rect width="32" height="32" rx="3" fill="#000"/><path d="M10 8l6 8 7-8M15 16l9 6" stroke="#e8c52a" stroke-width="2"/><circle cx="16" cy="16" r="5.500" fill="#e8c52a"/><circle cx="23" cy="9" r="4" fill="#e8c52a"/><circle cx="9" cy="9" r="2" fill="#e8c52a"/><circle cx="24" cy="22" r="3" fill="#e8c52a"/><path d="M0 21h21v11H0z" fill="#2a67e8"/><text x="9" y="30" class="pin">PIN</text></svg>
      <svg viewBox="0 0 32 32"><g fill="#fff"><circle cx="9" cy="13" r="2"/><circle cx="16" cy="13" r="2"/><circle cx="23" cy="13" r="2"/></g></svg>
    </div>
    <div class="dash"></div>
    <svg class="sq" width="32" height="32" viewBox="0 0 32 32"><path fill="#cac5e0" d="M0 0h16v16H0z"/><path fill="#776bb0" d="M16 0h16v16H16zM0 16h16v16H0z"/><path fill="#52258a" d="M16 16h16v16H16z"/><path d="M16 0v32M0 16h32" stroke="#ddd8ea" stroke-width="2.500"/></svg>
    <div class="rule"></div>
    <p class="f1">Values</p>
    <div class="drop">Add data fields here</div>
    <p class="f2">Drill through</p>
    <div class="tg"><span>Cross-report</span><em><i></i>Off</em></div>
    <div class="tg k"><span>Keep all filters</span><em class="on">On<i></i></em></div>
    <div class="drop black">Add drill-through fields here</div>
  </section>

  <section class="data">
    <div class="ph"><h2>Data</h2><svg width="16" height="16" viewBox="0 0 16 16"><path d="M2 1l6 7-6 7M8 1l6 7-6 7" fill="none" stroke="#fff" stroke-width="2"/></svg></div>
    <div class="dsearch"><svg width="26" height="26" viewBox="0 0 26 26"><circle cx="10" cy="10" r="8.500" fill="none" stroke="#aaa" stroke-width="1.800"/><path d="M16 16l8 9" stroke="#aaa" stroke-width="1.800"/></svg>Search</div>
    <div class="tree"><svg width="10" height="16" viewBox="0 0 10 16"><path d="M1.500 1l6.500 7-6.500 7" fill="none" stroke="#fff" stroke-width="1.800"/></svg><svg class="tbl" width="22" height="22" viewBox="0 0 22 22"><rect x="1" y="1" width="20" height="20" rx="4" fill="none" stroke="#fff" stroke-width="1.800"/><path d="M1 7.500h20M1 14.500h20M7.500 1v20M14.500 1v20" stroke="#fff" stroke-width="1.800"/></svg><span>social_media_entertai...</span></div>
  </section>
</main>

<footer class="status">
  <span class="pg">Page 1 of 2</span>
  <svg class="zoom" width="220" height="24" viewBox="0 0 220 24"><path d="M4 12h8M205 11.500h14M212 5v13" stroke="#ddd" stroke-width="2.400"/><path d="M21 11.500h175M108 6v11" stroke="#ddd" stroke-width="1.600"/><path d="M82 2h7v19h-7z" fill="#ddd"/></svg>
  <span class="pct">77%</span>
  <svg class="fit" width="26" height="20" viewBox="0 0 26 20"><rect class="l" x="1" y="1" width="24" height="18" rx="2"/><path class="l" d="M6 8V5h4M16 5h4v3M20 12v3h-4M10 15H6v-3"/></svg>
  <span class="upd">Update available (click to download)</span>
</footer>

<footer class="taskbar">
  <div><svg width="25" height="25" viewBox="0 0 25 25"><path fill="#fff" d="M0 3.500l11-1.600v10H0zM12.500 1.700L25 0v12H12.500zM0 13.200h11v10L0 21.600zM12.500 13.200H25V25l-12.500-1.700z"/></svg></div>
  <div class="tsearch">
    <svg width="34" height="34" viewBox="0 0 34 34"><circle cx="22" cy="12" r="10" fill="none" stroke="#fff" stroke-width="2"/><path d="M15 19L2 32" stroke="#fff" stroke-width="2"/></svg>
    <span>Type here to search</span>
    <svg class="art" width="140" height="66" viewBox="0 0 140 66">
      <path d="M0 68c0-14 6-21 22-21 14 0 18 7 30 9l88-4v16z" fill="#56c4e0"/>
      <path d="M9 60l3-11 5 5 4-5 5 7 5-1 5 7c-10 2-18 2-27-2z" fill="#d9eff8"/>
      <path d="M17 48c3-3 5-7 7-12 2-10 8-18 17-23-1-3-2-5-3-7 6 0 10 2 13 5 12 1 17 5 20 10 4 1 8 2 8 4-5 3-13 2-20 1-2 1-3 1-5 1 1 5 1 9-2 12-2-4-4-7-6-10-9 3-14 8-16 13 1 4-2 7-5 6-2 3-5 3-8 0z" fill="url(#whale)"/>
      <path d="M46 27c10-3 22-1 33-3-5 3-13 3-20 2-5 0-9 1-13 1z" fill="#eef0fc"/>
      <path d="M51 46c4-10 16-17 30-15 12 2 21 7 29 6 4-1 6-4 7-9-9-1-13-7-13-15 7 1 12 3 15 8 3-5 8-7 14-7 1 9-3 15-11 17-1 14-7 26-21 31-3 2-1 6-1 10-8-2-12-7-15-13-13-1-24-5-34-13z" fill="url(#whale)"/>
      <path d="M51 46c12 5 26 2 37-4" fill="none" stroke="#565ca4" stroke-width="2"/>
      <path d="M92 58c14 2 26-6 48-6v16H0c30-8 60-4 92-10z" fill="#56c4e0" opacity=".55"/>
    </svg>
  </div>
  <div class="exp"><svg width="40" height="40" viewBox="0 0 40 40"><path d="M1 5q0-3 3-3h11l4 4h17q3 0 3 3v5H1z" fill="#e8a33d"/><path d="M1 10h38v24H1z" fill="#ffd766"/><path d="M7 20q0-3 3-3h20q3 0 3 3v14h-6V24H13v10H7z" fill="#3a86d4"/></svg></div>
  <div><svg width="44" height="44" viewBox="0 0 44 44"><use href="#chrome"/></svg></div>
  <div><svg width="44" height="44" viewBox="0 0 44 44"><path d="M2 4L18 1l10 5 2 26L8 42z" fill="#12b8f5"/><path d="M26 3l14 3 2 12-4 24-22 1-8-8z" fill="#21d789"/><path d="M36 16l7 10-4 14-22 3 6-8z" fill="#e8f23c"/><path d="M9 9h26v26H9z" fill="#000"/><text x="11.500" y="21.500" class="pc">PC</text><path d="M12 30h10" stroke="#fff" stroke-width="2"/></svg></div>
  <div><svg width="44" height="44" viewBox="0 0 44 44"><path d="M31 1l11 5v32l-11 5L12 26l-7 6-4-2v-3l6-5-6-5v-3l4-2 7 6zM31 13L19 22l12 9z" fill="#1f8fdc" fill-rule="evenodd"/><path d="M31 1l11 5v32l-11 5z" fill="#35a8f0"/></svg></div>
  <div class="wide"><svg width="45" height="44" viewBox="-5 0 45 44"><use href="#pbi"/></svg><span>D...</span></div>
  <div class="wide act"><svg width="45" height="44" viewBox="-3 0 45 44"><use href="#pbi"/></svg><span>C...</span></div>
  <div><svg width="44" height="44" viewBox="0 0 44 44"><path d="M43 33A21 21 0 1 1 43 20c-1 8-9 9-14 7-2 7 6 11 14 6z" fill="#0f62b4"/><path d="M2 18C6 4 16 0 24 1c12 1 19 10 19 19 0 8-8 10-14 8 3-4 0-13-9-14C12 13 5 15 2 18Z" fill="url(#edge)"/><path d="M1 29h22v13H1z" fill="#c9770f"/><path d="M1 29h22v5H1z" fill="#e8951e"/><path d="M10 33h4v4h-4z" fill="#3a2508"/></svg></div>
  <div><svg width="42" height="42" viewBox="0 0 42 42"><rect x="1" y="1" width="40" height="40" rx="4" fill="#2f678f"/><path d="M7 6c9 0 16 8 19 16 1 4 5 6 8 9l-6 1 4 5M7 6c-2 5 4 8 4 14s0 12 4 15l2-8" fill="none" stroke="#eef4f8" stroke-width="1.800"/><path d="M28 6l8 4-4 0" stroke="#eef4f8" fill="none" stroke-width="2"/></svg></div>
  <div class="exp"><svg width="42" height="42" viewBox="0 0 42 42"><path d="M2 4h37v30H2z" fill="#eee"/><path d="M2 4h37v6H2z" fill="#3a86d4"/><path d="M5 14h14M5 19h12M5 24h8" stroke="#bbb"/><path d="M21 16h9q4 0 4 4v7H19v5h-4q-3-8 3-10h8v-1h-6z" fill="#3a74ab"/><path d="M33 23h5q5 9-1 12h-8v2h6v3q-6 3-11 0v-9h9z" fill="#fbd04a"/></svg></div>
  <div><span class="pinwheel"></span></div>
  <div class="wa"><svg width="46" height="44" viewBox="0 0 46 44"><path d="M4 40l3-10C1 16 10 3 23 3c11 0 19 8 19 18 0 14-14 22-26 16z" fill="none" stroke="#2bd366" stroke-width="4"/><path d="M16 13c-4 3 0 10 4 13s9 5 11 2v-3l-5-2-2 2c-3-1-5-4-6-6l2-2-2-4z" fill="#2bd366"/></svg><b>51</b></div>
  <div><svg width="44" height="44" viewBox="0 0 44 44"><circle cx="22" cy="22" r="21" fill="#f4431c"/><path d="M8 14h5l4 16 6-16 5 16 7-15h-9" fill="none" stroke="#fff" stroke-width="3"/></svg></div>
  <div class="wide un"><svg width="46" height="50" viewBox="0 0 46 50"><use href="#chrome" y="3"/><circle cx="32" cy="35" r="13.500" fill="#0f559c"/><text x="32" y="41" class="cb">B</text></svg><span>R...</span></div>
  <div class="wide un"><svg width="46" height="44" viewBox="0 0 46 44"><path d="M12 4l24 3 2 30-4 4-30-8z" fill="#6fb8c9"/><path d="M12 4l24 3-8 30-24-4z" fill="#a9dbe6"/><path d="M12 4l24 3-1 5-24-4z" fill="#e6eef0"/></svg><span>*...</span></div>
  <div class="wide un"><svg width="46" height="50" viewBox="0 0 46 50"><use href="#chrome" y="3"/><circle cx="32" cy="35" r="13.500" fill="#bd1e5c"/><text x="32" y="41" class="cb">M</text></svg><span>D...</span></div>
  <div class="wx"><svg width="44" height="42" viewBox="0 0 44 42"><path d="M28 2c12 4 16 14 12 25-5 14-24 17-34 6 14 4 28-8 22-31Z" fill="#f0a02c"/><path d="M6 18c-6-1-6-9 0-9 1-9 13-10 15-2 9-1 10 11 2 11z" fill="#b8cdf2"/></svg><span>24°C</span></div>
  <div><svg width="18" height="12" viewBox="0 0 18 12"><path class="l" d="M1 10l8-8 8 8"/></svg></div>
  <div><svg width="20" height="28" viewBox="0 0 20 28"><path class="l thin" d="M3 7h10v13H3q-2 0-2-2V9q0-2 2-2zM13 12l6-3v10l-6-3M3 3q5-3 10 0M3 25q5 3 10 0"/></svg></div>
  <div><svg width="28" height="30" viewBox="0 0 28 30"><path class="l thin" d="M1 7l26-6v15M1 7v16h15M9 11c5-3 9 0 8 4M8 19v-5h4"/><circle cx="21" cy="23" r="6.500" fill="#e81123"/></svg></div>
  <div><svg width="28" height="28" viewBox="0 0 28 28"><circle cx="14" cy="14" r="13.500" fill="#e9d41f"/><circle cx="14" cy="14" r="12" fill="none" stroke="#3fa535" stroke-width="3" stroke-dasharray="20 17.700"/><path d="M14 8v12M8 14h12" stroke="#1d8a2a" stroke-width="4.500"/></svg></div>
  <div><svg width="28" height="24" viewBox="0 0 28 24"><path class="l thin" d="M1 8h5l6-6v20l-6-6H1zM16 8q3 4 0 8M20 5q5 7 0 14"/><path d="M24 2q7 10 0 20" fill="none" stroke="#777" stroke-width="1.500"/></svg></div>
  <div><svg width="24" height="24" viewBox="0 0 24 24"><path class="l thin" d="M2 23C2 10 10 3 22 2M7 23C7 14 13 8 22 8M13 23c0-5 4-9 9-9"/><circle cx="20" cy="21" r="2.500" fill="#ddd"/></svg></div>
  <div><svg width="28" height="20" viewBox="0 0 28 20"><path d="M2 2h21v15H2zM23 7h3v5h-3" fill="none" stroke="#fff" stroke-width="2"/><path d="M5 5h9v9H5z" fill="#fff"/></svg></div>
  <div class="clock"><span>10:57 AM</span><span>5/10/2025</span></div>
  <div><svg width="30" height="30" viewBox="0 0 30 30"><path class="l thin" d="M1 2h28v22h-4v5l-5-5H1z"/></svg></div>
  <div class="peek"></div>
</footer>
</body>
</html>
```
FILE: styles.css
```css
* { box-sizing: border-box; }
body { margin: 0; width: 2560px; height: 1440px; overflow: hidden; background: #141414; color: #fff; font-family: "Open Sans", "Noto Sans", sans-serif; font-size: 19.5px; }
svg { display: block; flex: none; overflow: visible; }
.defs { position: absolute; }
h1, h2, h3, h4, p, ul { margin: 0; padding: 0; }

/* icon strokes */
.l { fill: none; stroke: #d2d0ce; stroke-width: 2; }
.l.thin { stroke-width: 1.5; }
.l.thick { stroke-width: 3; }
.d { fill: none; stroke: #666; stroke-width: 2; }
.s { fill: none; stroke: #b9cfc9; stroke-width: 2; }
.w { fill: none; stroke: #fff; stroke-width: 2.5; }
.a { fill: none; stroke: #c0bebc; stroke-width: 1.6; }
.a.bold { stroke: #ddd; stroke-width: 2.4; }
.o { fill: none; stroke: #f7b65c; stroke-width: 2.5; }
.gr { fill: none; stroke: #6fdc8c; stroke-width: 2.5; }
.pen { fill: #292929; stroke: #4a9fe0; stroke-width: 2; }
.fb { fill: #0a63b5; stroke: #72b3ee; stroke-width: 1.5; }
.fg { fill: #605e5c; stroke: #8a8886; stroke-width: 1.5; }
.xl { font: 700 17px "Open Sans", sans-serif; fill: #fff; text-anchor: middle; }
.fx { font: italic 29px "Liberation Serif", serif; fill: #777; }
.dax { font: 600 12px "Open Sans", sans-serif; fill: #d2d0ce; stroke: #141414; stroke-width: 3; paint-order: stroke; }
.lg1 { font: 11px "Open Sans", sans-serif; fill: #444; }
.lg2 { font: 700 10.5px "Open Sans", sans-serif; fill: #333; }

/* title bar */
.titlebar { display: flex; align-items: center; height: 60px; }
.qa { margin-left: 28px; }
.undo { margin-left: 25px; }
.redo { margin-left: 25px; }
.doc { margin-left: 16px; width: 433px; padding-top: 10px; font-size: 20px; letter-spacing: .13px; white-space: nowrap; color: #d6d6d6; }
.doc-caret { flex: none; }
.top-search { display: flex; align-items: center; width: 700px; height: 42px; margin-left: 421px; padding-left: 29px; background: #1f1f1f; border-radius: 4px; gap: 19px; font-size: 23px; color: #9a9a9a; letter-spacing: -.3px; }
.user { margin-left: 371px; width: 153px; padding-top: 2px; font-size: 20px; letter-spacing: -.2px; color: #d6d6d6; white-space: nowrap; }
.win { margin: 4px 0 0 54px; }

.menubar { display: flex; align-items: flex-start; height: 63px; padding: 5px 0 0 39px; font-size: 23.5px; color: #d6d6d6; }
.menubar a { line-height: 44px; width: 95px; }
.menubar span { display: inline-block; }
.menubar .m-home { width: 108px; color: #fff; font-weight: 700; letter-spacing: -.5px; }
.menubar .m-home span { border-bottom: 3px solid #2aab93; border-radius: 1px; }
.menubar .m-insert { width: 102px; letter-spacing: -.2px; }
.menubar .m-model { width: 144px; }
.menubar .m-view { width: 93px; }
.menubar .m-opt { width: 139px; letter-spacing: -.1px; }
.share { display: flex; align-items: center; width: 146px; height: 42px; margin: 2px 9px 0 auto; padding-left: 11px; background: #0e6a58; border-radius: 6px; font-size: 20px; color: #b9cfc9; }
.share span { width: 59px; margin-left: 14px; letter-spacing: -.3px; }

/* ribbon */
.ribbon { display: flex; position: relative; width: 2533px; height: 175px; margin-left: 14px; padding: 7px 0 8px; background: #292929; border-radius: 16px; }
.grp { display: flex; flex-direction: column; border-right: 2px solid #3b3b3b; }
.g-clip { width: 281px; } .g-data { width: 641px; } .g-q { width: 201px; } .g-i { width: 258px; }
.g-c { width: 324px; } .g-s { width: 128px; } .g-p { width: 103px; } .g-co { width: 102px; }
.btns { display: flex; height: 134px; padding-top: 5px; }
.g-clip .btns { padding-left: 24px; } .g-data .btns { padding-left: 23px; } .g-q .btns { padding-left: 37px; }
.g-i .btns { padding-left: 25px; } .g-c .btns { padding-left: 51px; } .g-s .btns { padding-left: 38px; }
.g-p .btns, .g-co .btns { padding-left: 25px; }
.rb { display: flex; flex-direction: column; align-items: center; flex: none; width: 50px; font-size: 19.6px; line-height: 28px; white-space: nowrap; letter-spacing: -.05px; }
.rb svg { margin-bottom: 3px; }
.rb i { display: inline-block; width: 7px; height: 7px; margin: 0 2px 4px 6px; border: solid currentColor; border-width: 0 2px 2px 0; transform: rotate(45deg) scale(.9); }
.off { color: #5c5c5c; }
.ml20 { margin-left: 20px; } .ml27 { margin-left: 27px; } .ml34 { margin-left: 34px; } .ml35 { margin-left: 35px; }
.ml37 { margin-left: 37px; } .ml40 { margin-left: 40px; } .ml43 { margin-left: 44px; } .ml53 { margin-left: 53px; } .ml55 { margin-left: 55px; }
.cap { font-size: 17px; line-height: 24px; text-align: center; letter-spacing: -.15px; }
.clip-list { display: flex; flex-direction: column; margin: -7px 0 0 17px; color: #5c5c5c; white-space: nowrap; }
.clip-list div { display: flex; align-items: center; flex: none; height: 46px; gap: 7px; font-size: 19.8px; }
.collapse { margin: 139px 0 0 462px; }

/* workspace */
.main { display: flex; height: 1031px; }
.rail { width: 71px; padding: 17px 0 0 21px; background: linear-gradient(#2aab93, #2aab93) 0 0 / 5px 70px no-repeat; }
.rail svg:nth-child(1) { margin-top: 2px; } .rail svg:nth-child(2) { margin-top: 38px; }
.rail svg:nth-child(3) { margin: 39px 0 0 -1px; } .rail svg:nth-child(4) { margin: 37px 0 0 -2px; }
.center { width: 1858px; }
.stage { display: flex; height: 970px; background: #fff; }
.page { width: 1725px; margin-left: 38px; padding: 25px 31px 26px 33px; background: #050d1f; box-shadow: 0 0 14px rgba(0,0,0,.35); clip-path: inset(0 -20px); }
.report { position: relative; height: 919px; background: #fff0d3; border-radius: 24px; }
.report::before { content: ""; position: absolute; left: 0; top: 191px; width: 6px; height: 53px; background: #fff; }
.rhead { display: flex; height: 80px; }
.logo { margin: 10px 0 0 11px; }
h1 { width: 300px; margin: 11px 11px 0 10px; font-size: 21px; line-height: 29px; font-weight: 700; letter-spacing: -.4px; color: #0a1433; text-align: center; white-space: nowrap; }
.slicers { display: flex; gap: 27px; padding-top: 11px; color: #222; }
.sl label { display: flex; justify-content: space-between; padding: 0 4px; font: 18.5px/22px Roboto, sans-serif; letter-spacing: .32px; white-space: nowrap; }
.sl label svg { margin-top: 4px; }
.sl div { display: flex; justify-content: space-between; align-items: center; height: 37px; margin-top: 8px; padding: 3px 7px 0; border: 1.5px solid #5c564c; font-size: 19px; color: #6b6459; }
.sl div svg { margin-bottom: 4px; }
.s1 { width: 272px; } .s2 { width: 144px; } .s3 { width: 155px; } .s4 { width: 122px; } .s5 { width: 115px; } .s6 { width: 125px; } .s7 { width: 113px; }
.rbody { display: flex; padding-left: 18px; }
.kpis { width: 191px; }
.navcard { display: flex; align-items: center; height: 74px; margin-bottom: 41px; padding-left: 20px; gap: 33px; background: #3930a0; border-radius: 24px; }
.kpi { height: 104px; margin-bottom: 14px; background: #3930a0; border-radius: 24px; text-align: center; overflow: hidden; font-family: Roboto, sans-serif; }
.kpi h3 { font-size: 15.5px; line-height: 18.5px; font-weight: 700; letter-spacing: .15px; white-space: nowrap; }
.kpi b { display: block; font-size: 38px; line-height: 38px; font-weight: 400; color: #e8e6ee; -webkit-text-stroke: .5px #e8e6ee; }
.k1 { padding-top: 11px; } .k1 b { margin-top: 25px; }
.k2 { padding-top: 12px; } .k2 b { margin-top: 16px; }
.k3 { padding-top: 16px; } .k3 b { margin-top: 16px; }
.k4 { padding-top: 3px; } .k4 b { margin-top: 5px; }
.k5 { padding-top: 8px; } .k5 b { margin-top: 12px; }
.k6 { padding-top: 10px; } .k6 b { margin-top: 10px; }
.col { margin: 37px 0 0 19px; }
.c2 { width: 471px; } .c3 { width: 408px; } .c4 { width: 482px; margin-left: 19px; }
.card { border-radius: 24px; overflow: hidden; }
.purple { background: #3930a0; }
.white { background: #fff; }
.visual { position: relative; margin-top: 30px; }
.c3 .card + .card { margin-top: 38px; }
.vtools { position: absolute; top: -27px; right: 14px; display: flex; gap: 6px; }
.vtools span { display: grid; place-items: center; width: 41px; height: 40px; background: #fff; }

/* chart text */
.ttl text { font: 500 18.6px Roboto, sans-serif; fill: #fff; text-anchor: middle; }
.ttl.dk text { font-weight: 400; fill: #000; }
.lgd text, .ax text { font-family: "Open Sans", sans-serif; font-size: 16px; fill: #e2e0f2; }
.ax text { font-size: 15px; }
.lgd.dk text, .ax.dk text { fill: #1c2333; }
.ax.gy text { fill: #777; }
.ax.it text { font-size: 15.5px; }
.end text { text-anchor: end; }
.mid text { text-anchor: middle; }
.at, .vt text { font: 14px Roboto, sans-serif; fill: #222; text-anchor: middle; }
.at.wt { fill: #e2e0f2; font-weight: 500; }
.grid { fill: none; stroke: #a7a2d6; stroke-width: 1.5; stroke-dasharray: 1.5 5.3; }
.grid.lt { stroke: #c8c8c8; }

.notes { display: flex; height: 391px; margin-top: 38px; padding: 22px 24px 15px 40px; background: #fff; border-radius: 24px; box-shadow: 6px 8px 14px rgba(90,70,30,.35); color: #333; font: 18.67px/22.33px "Liberation Sans", Arial, sans-serif; }
.notes ul { width: 407px; list-style: none; white-space: nowrap; }
.notes b { color: #222; }
.notes li { position: relative; }
.notes li::before { content: ""; position: absolute; left: -11px; top: 11px; width: 4px; height: 4px; border-radius: 2px; background: #333; }
.sbar { width: 11px; background: #444; }

.filters { display: flex; flex-direction: column; align-items: flex-end; width: 57px; margin-left: auto; padding: 25px 19px 0 0; border-left: 1.5px solid #aaa; background: #fff; color: #222; }
.filters .fi { margin: 33px -4px 0 0; }
.filters span { writing-mode: vertical-rl; margin: 16px -7px 0 0; font-size: 25px; line-height: 32px; font-weight: 600; letter-spacing: .2px; }

.tabs { display: flex; height: 61px; background: #292929; border-left: 1px solid #444; font-size: 19.5px; }
.views { display: flex; width: 223px; border-right: 1px solid #5c5c5c; }
.desk { margin: 9px 0 0 17px; } .phone { margin: 9px 0 0 45px; } .arr { margin: 21px 0 0 37px; }
.tab { width: 129px; padding-top: 18px; line-height: 28px; text-align: center; border-right: 1px solid #444; white-space: nowrap; }
.tab.on { font-weight: 600; border-bottom: 7px solid #2aab93; }
.tab.t2 { width: 218px; border-right: 0; }
.plus { width: 69px; padding: 19px 0 0 25px; background: #2aab93; }

/* visualizations pane */
.vis { width: 317px; border-left: 1.5px solid #5c5c5c; border-right: 1.5px solid #5c5c5c; font-size: 20px; }
.ph { display: flex; justify-content: space-between; align-items: center; height: 68px; padding: 0 17px 0 14px; }
.ph svg { margin-bottom: 2px; }
h2 { font-size: 26px; font-weight: 600; letter-spacing: -.1px; }
h4 { padding: 1px 0 0 14px; font-size: 19.5px; line-height: 24px; font-weight: 600; letter-spacing: 0; }
.modes { display: flex; gap: 61px; margin: 7px 0 0 14px; }
.mode { display: grid; place-items: center; width: 56px; height: 56px; border-radius: 4px; }
.mode.on { background: #292929; }
.gallery { display: grid; grid-template-columns: repeat(6, 32px); grid-auto-rows: 32px; gap: 17px; margin: 16px 0 0 19px; }
.gallery svg { width: 32px; height: 32px; }
.n123 { font: 14px "Open Sans", sans-serif; fill: #3a96dd; text-anchor: middle; }
.rr { font: 600 28px "Open Sans", sans-serif; fill: #3a96dd; text-anchor: middle; }
.py { font-weight: 400; stroke: #3a96dd; stroke-width: .8; }
.pin { font: 700 10px "Open Sans", sans-serif; fill: #fff; text-anchor: middle; }
.dash { margin: 11px 10px 0 11px; border-top: 1.5px dashed #ddd; }
.sq { margin: 12px 0 0 19px; }
.rule { margin-top: 15px; border-top: 2px solid #ddd; }
.vis p { padding-left: 21px; line-height: 28px; }
.vis .f1 { margin-top: 16px; }
.vis .f2 { margin-top: 20px; font-weight: 600; letter-spacing: -.1px; }
.drop { height: 49px; margin: 8px 10px 0 7px; padding-left: 18px; line-height: 47px; border: 1.5px dashed #6a6a6a; border-radius: 3px; white-space: nowrap; }
.drop.black { height: 43px; margin-top: 18px; padding-left: 14px; line-height: 43px; background: #000; letter-spacing: .1px; }
.tg { display: flex; justify-content: space-between; align-items: center; height: 28px; margin: 15px 38px 0 21px; }
.tg.k { margin-top: 20px; }
.tg.k span { margin-bottom: 4px; }
.tg em { display: flex; align-items: center; justify-content: center; gap: 5px; width: 56px; height: 28px; border: 1.5px solid #aaa; border-radius: 14px; font-style: normal; font-size: 15px; color: #aaa; }
.tg em i { width: 14px; height: 14px; border-radius: 7px; background: #aaa; }
.tg em.on { background: #2aab93; border-color: #2aab93; color: #1c4a42; }
.tg em.on i { background: #222; }

/* data pane */
.data { width: 314px; }
.data .ph { padding-right: 16px; }
.dsearch { display: flex; align-items: center; gap: 12px; height: 42px; margin: 11px 6px 0 7px; padding-left: 21px; border: 1.5px solid #5c5c5c; border-bottom-color: #999; border-radius: 6px; background: #232323; font-size: 22.5px; color: #9a9a9a; }
.tree { display: flex; align-items: center; margin-top: 24px; padding-left: 29px; font-size: 20px; line-height: 28px; letter-spacing: -.15px; }
.tree svg { margin-right: 10px; }
.tree .tbl { margin-left: 1px; }

.status { display: flex; align-items: center; height: 41px; border-top: 1.5px solid #5c5c5c; border-bottom: 1px solid #000; padding-left: 7px; color: #d6d6d6; white-space: nowrap; }
.pg { width: 1843px; padding-top: 4px; font-size: 19.8px; letter-spacing: .15px; }
.pct { width: 75px; margin-left: 22px; }
.upd { margin-left: 25px; padding-top: 4px; font-size: 20px; letter-spacing: .04px; }

/* taskbar */
.taskbar { display: grid; grid-template-columns: 84px 504px 72px 70px 69px 68px 100px 98px 70px 68px 70px 68px 70px 66px 99px 99px 99px 186px 56px 58px 54px 56px 57px 56px 56px 112px 74px 21px; height: 70px; background: #2b2b2b; }
.taskbar > div { display: flex; align-items: center; justify-content: center; position: relative; }
.taskbar > .exp { padding-left: 4px; }
.taskbar > .tsearch { justify-content: flex-start; background: #333; border: 2px solid #5a5a5a; padding-left: 21px; font-size: 24.5px; letter-spacing: -.2px; color: #ddd; overflow: hidden; }
.tsearch span { width: 287px; margin-left: 19px; padding-top: 2px; white-space: nowrap; }
.tsearch .art { margin-left: 1px; }
.taskbar > .wide { justify-content: flex-start; padding-left: 10px; }
.wide span { margin-left: 2px; font-size: 20px; letter-spacing: -.3px; }
.wide::after { content: ""; position: absolute; left: 9px; right: 8px; bottom: 0; height: 4px; background: #bbb; }
.act { background: #595857; }
.act::after { left: 0; right: 0; }
.pc { font: 700 13px "Open Sans", sans-serif; fill: #fff; }
.cb { font: 700 17px "Open Sans", sans-serif; fill: #fff; text-anchor: middle; }
.pinwheel { width: 42px; height: 42px; border-radius: 50%; background: radial-gradient(circle, #fff 0 18%, transparent 40%), conic-gradient(#8a6cf5, #f23ae8 50deg, #f4305a 100deg, #f28a2a 150deg, #fbd32a 190deg, #7be03a 235deg, #25d3a6 270deg, #27b8f0 315deg, #8a6cf5); }
.wa b { position: absolute; right: 3px; bottom: 5px; width: 30px; height: 30px; border: 1px solid #999; border-radius: 50%; background: #1e1e1e; font-size: 17px; line-height: 28px; text-align: center; font-weight: 600; }
.taskbar > .wx { justify-content: flex-start; padding-left: 42px; gap: 14px; font-size: 24px; letter-spacing: -.6px; }
.taskbar > .clock { flex-direction: column; font-size: 20px; line-height: 33px; letter-spacing: -.45px; padding-top: 1px; }
.peek { background: linear-gradient(#888, #888) 13px 0 / 1.5px 100% no-repeat; }
```
